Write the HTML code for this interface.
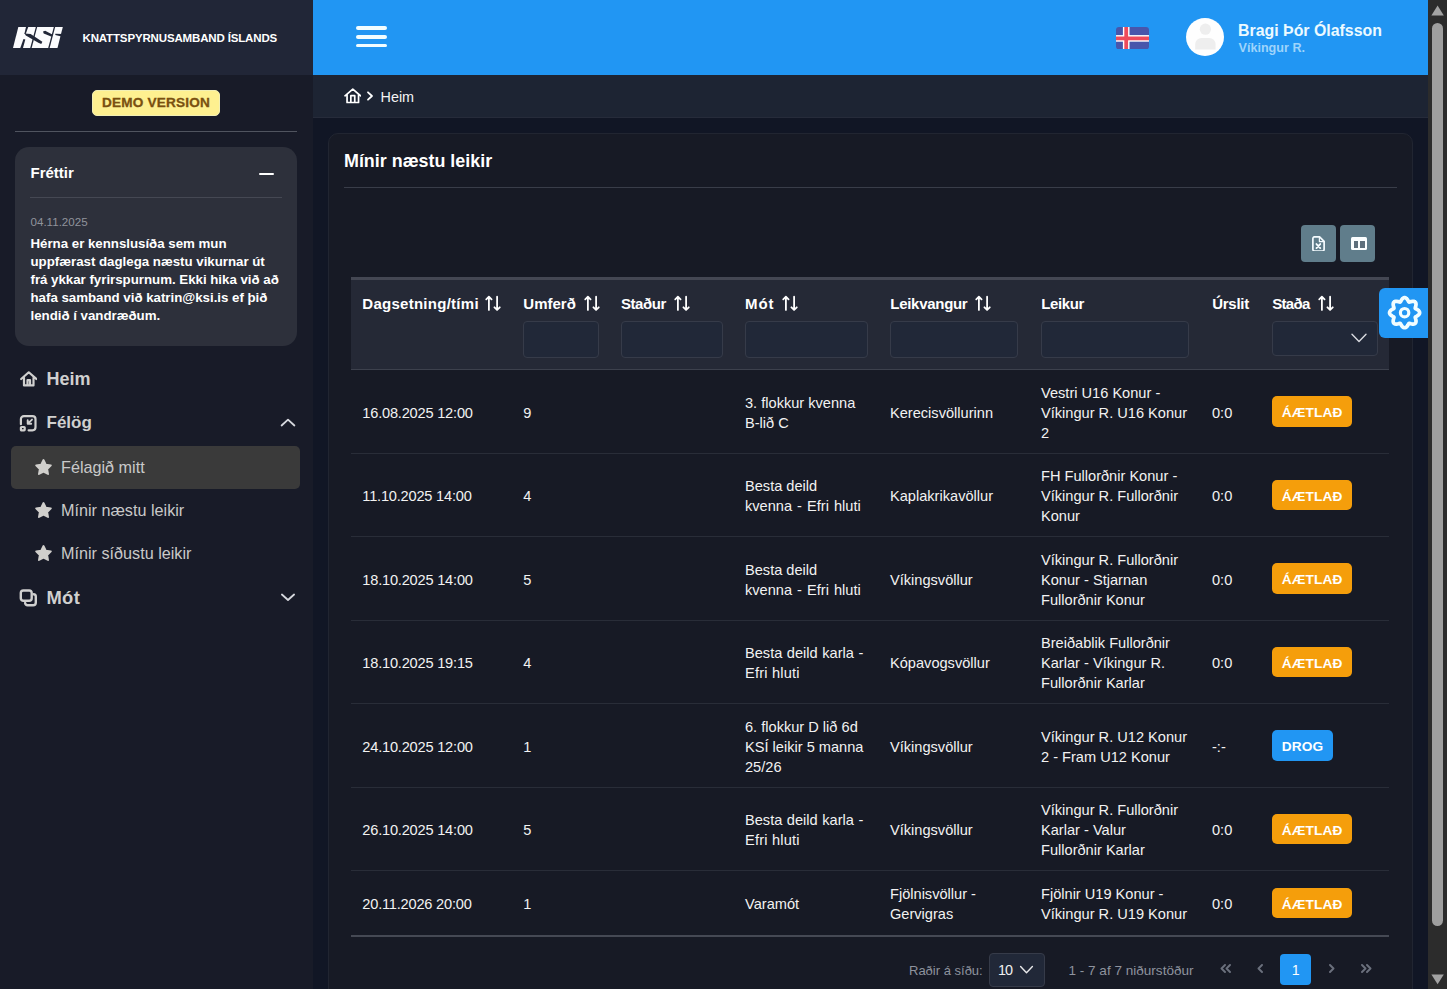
<!DOCTYPE html>
<html lang="is"><head><meta charset="utf-8"><title>KSI</title><style>
*{box-sizing:border-box;margin:0;padding:0}
html,body{width:1447px;height:989px;overflow:hidden;background:#111625;font-family:"Liberation Sans",sans-serif;}
.a{position:absolute}
.t{position:absolute;white-space:nowrap;line-height:1;}
#sb{left:0;top:0;width:313px;height:989px;background:#181b28}
#sbh{left:0;top:0;width:313px;height:75px;background:#212637}
#top{left:313px;top:0;width:1115px;height:75px;background:#2196f3}
#bc{left:313px;top:75px;width:1115px;height:43px;background:#1d2433;border-bottom:1px solid #262b3a}
#scr{left:1428px;top:0;width:19px;height:989px;background:#2c2c2c}
#card{left:328px;top:133px;width:1085px;height:900px;background:#171a25;border:1px solid #212531;border-radius:10px}
.inp{position:absolute;background:#212838;border:1px solid #363b49;border-radius:4px}
.rowb{position:absolute;left:351px;width:1038px;height:1px;background:#292d38}
.cell{position:absolute;white-space:nowrap;color:#f2f2f2;font-size:14.6px;line-height:20px;}
.th{position:absolute;white-space:nowrap;color:#fff;font-weight:bold;font-size:15px;line-height:16px}
.badge{position:absolute;height:30.8px;border-radius:5px;color:#fff;font-weight:bold;font-size:13.7px;line-height:30.8px;padding-top:2px;text-align:center;letter-spacing:0.15px}
.mi{position:absolute;white-space:nowrap;color:#d0d0cf;font-weight:bold;font-size:17.4px;line-height:20px}
.si{position:absolute;white-space:nowrap;color:#c9c9c9;font-size:16.2px;line-height:20px}
.nl{position:absolute;left:30.5px;white-space:nowrap;color:#fff;font-weight:bold;font-size:13.3px;line-height:18px;letter-spacing:-0.02px}
</style></head><body>
<div id="sb" class="a"></div><div id="sbh" class="a"></div>
<svg class="a" style="left:5px;top:20px" width="70" height="35" viewBox="0 0 1447 724">
<polygon points="275,145 1195,145 1085,580 165,580" fill="#fbfbfd"/>
<g fill="#212637" stroke="none">
<polygon points="640,135 668,135 548,590 518,590"/>
<polygon points="1012,135 1040,135 920,590 890,590"/>
<polygon points="436,135 484,135 428,292 400,292"/>
<polygon points="405,278 530,288 772,448 750,498 690,470 430,322"/>
<polygon points="382,392 420,402 368,590 312,590"/>
<polygon points="786,238 832,222 978,298 966,348 800,280"/>
<polygon points="1040,284 1200,288 1188,348 1040,308"/>
</g></svg>
<div class="t" style="left:82.5px;top:33px;color:#fff;font-weight:bold;font-size:11.5px;letter-spacing:-0.15px">KNATTSPYRNUSAMBAND ÍSLANDS</div>
<div class="a" style="left:92px;top:90px;width:128px;height:26px;background:#fef090;border:1px solid #f2efb4;border-radius:5px;color:#7a5010;-webkit-text-stroke:0.3px #7a5010;font-weight:bold;font-size:13.6px;line-height:24.4px;text-align:center;letter-spacing:0.2px">DEMO VERSION</div>
<div class="a" style="left:15px;top:131px;width:282px;height:1px;background:#50545f"></div>
<div class="a" style="left:15px;top:147px;width:282px;height:199px;background:#2d303b;border-radius:14px"></div>
<div class="t" style="left:30.5px;top:165.3px;color:#fff;font-weight:bold;font-size:15px">Fréttir</div>
<div class="a" style="left:259px;top:172.6px;width:15px;height:2px;background:#fff;border-radius:1px"></div>
<div class="a" style="left:30px;top:197px;width:252px;height:1px;background:#454853"></div>
<div class="t" style="left:30.5px;top:215.5px;color:#90939b;font-size:11.6px">04.11.2025</div>
<div class="nl" style="top:234.7px">Hérna er kennslusíða sem mun</div>
<div class="nl" style="top:252.8px">uppfærast daglega næstu vikurnar út</div>
<div class="nl" style="top:270.9px">frá ykkar fyrirspurnum. Ekki hika við að</div>
<div class="nl" style="top:289.0px">hafa samband við katrin@ksi.is ef þið</div>
<div class="nl" style="top:307.1px">lendið í vandræðum.</div>
<svg class="a" style="left:19.5px;top:371px" width="17.5" height="15.6" viewBox="0 0 18 16" fill="none" stroke="#d0d0cf" stroke-width="2.25" stroke-linejoin="round" stroke-linecap="round"><path d="M1.2 8.2L9 1.3l7.8 6.9M4.1 6.8V14.8h9.8V6.8M7.7 14.6V9.4h2.6v5.2"/></svg>
<div class="mi" style="left:46.5px;top:368.6px;font-size:18px">Heim</div>
<svg class="a" style="left:19px;top:413.5px" width="19" height="19" viewBox="0 0 19 19" fill="none" stroke="#d0d0cf" stroke-width="2.2" stroke-linecap="round" stroke-linejoin="round"><path d="M1.9 10.2V5.1a3 3 0 0 1 3-3h8.6a3 3 0 0 1 3 3v8.2a3 3 0 0 1-3 3H9.6"/><rect x="1.9" y="13" width="3.8" height="3.3" rx="0.6"/><path d="M13 5.6L8.8 9.6M8.7 6.3v3.4h3.5" stroke-width="1.9"/></svg>
<div class="mi" style="left:46.5px;top:413.3px;font-size:17px">Félög</div>
<svg class="a" style="left:279.7px;top:417px" width="16" height="11" viewBox="0 0 16 11" fill="none" stroke="#d6d8de" stroke-width="1.8" stroke-linecap="round" stroke-linejoin="round"><path d="M1.6 8.5L8 2.6l6.4 5.9"/></svg>
<div class="a" style="left:11px;top:446px;width:289px;height:43px;background:#3a3a3a;border-radius:5px"></div>
<svg class="a" style="left:34px;top:457.6px" width="19" height="18" viewBox="0 0 24 23"><path fill="#d0cfcc" stroke="#d0cfcc" stroke-width="2.4" stroke-linejoin="round" d="M12 2.6l2.9 5.9 6.5.9-4.7 4.6 1.1 6.5L12 17.4l-5.8 3.1 1.1-6.5L2.6 9.4l6.5-.9z"/></svg>
<div class="si" style="left:61px;top:456.5px">Félagið mitt</div>
<svg class="a" style="left:34px;top:500.8px" width="19" height="18" viewBox="0 0 24 23"><path fill="#d0cfcc" stroke="#d0cfcc" stroke-width="2.4" stroke-linejoin="round" d="M12 2.6l2.9 5.9 6.5.9-4.7 4.6 1.1 6.5L12 17.4l-5.8 3.1 1.1-6.5L2.6 9.4l6.5-.9z"/></svg>
<div class="si" style="left:61px;top:499.7px">Mínir næstu leikir</div>
<svg class="a" style="left:34px;top:544.4px" width="19" height="18" viewBox="0 0 24 23"><path fill="#d0cfcc" stroke="#d0cfcc" stroke-width="2.4" stroke-linejoin="round" d="M12 2.6l2.9 5.9 6.5.9-4.7 4.6 1.1 6.5L12 17.4l-5.8 3.1 1.1-6.5L2.6 9.4l6.5-.9z"/></svg>
<div class="si" style="left:61px;top:543.3px">Mínir síðustu leikir</div>
<svg class="a" style="left:18px;top:588px" width="20" height="20" viewBox="0 0 20 20" fill="none" stroke="#d0d0cf" stroke-width="2.4" stroke-linejoin="round" stroke-linecap="round"><rect x="2.8" y="2.5" width="10.9" height="10.3" rx="2.6"/><path d="M15.5 6.2a2.3 2.3 0 0 1 2.3 2.3v6a2.7 2.7 0 0 1-2.7 2.7H9.6a2.6 2.6 0 0 1-2.5-2.2"/></svg>
<div class="mi" style="left:46.5px;top:587.6px;font-size:18.4px;letter-spacing:0.3px">Mót</div>
<svg class="a" style="left:279.7px;top:591.5px" width="16" height="11" viewBox="0 0 16 11" fill="none" stroke="#d6d8de" stroke-width="1.8" stroke-linecap="round" stroke-linejoin="round"><path d="M1.9 2.5L8 8l6.1-5.5"/></svg>
<div id="top" class="a"></div>
<div class="a" style="left:356px;top:26.3px;width:31px;height:3.5px;border-radius:2px;background:#f2fdff"></div>
<div class="a" style="left:356px;top:35.2px;width:31px;height:3.5px;border-radius:2px;background:#f2fdff"></div>
<div class="a" style="left:356px;top:43.8px;width:31px;height:3.5px;border-radius:2px;background:#f2fdff"></div>
<svg class="a" style="left:1116px;top:26.5px" width="33" height="22.4" viewBox="0 0 33 22.4"><defs><clipPath id="fc"><rect width="33" height="22.4" rx="3"/></clipPath></defs><g clip-path="url(#fc)"><rect width="33" height="22.4" fill="#4856ab"/><rect x="6.9" width="6.6" height="22.4" fill="#fff"/><rect y="8.1" width="33" height="6.6" fill="#fff"/><rect x="8.3" width="3.8" height="22.4" fill="#ee4b5b"/><rect y="9.5" width="33" height="3.8" fill="#ee4b5b"/></g></svg>
<svg class="a" style="left:1186px;top:18.2px" width="38" height="38" viewBox="0 0 38 38"><circle cx="19" cy="19" r="19" fill="#fefefe"/><circle cx="19.4" cy="11.2" r="5.6" fill="#eeeeee"/><path d="M9.2 31.6v-5.2a6.4 6.4 0 0 1 6.4-6.4h7.6a6.4 6.4 0 0 1 6.4 6.4v5.2z" fill="#eeeeee"/></svg>
<div class="t" style="left:1238px;top:22.6px;color:#ecfaff;font-weight:bold;font-size:15.9px">Bragi Þór Ólafsson</div>
<div class="t" style="left:1238.5px;top:42.4px;color:#9ed4fb;font-weight:bold;font-size:12.6px">Víkingur R.</div>
<div id="bc" class="a"></div>
<svg class="a" style="left:343.5px;top:88px" width="17.6" height="15.6" viewBox="0 0 18 16" fill="none" stroke="#fff" stroke-width="1.75" stroke-linejoin="round" stroke-linecap="round"><path d="M1 8L9 1.1l8 6.9M3.1 6.4V14.9h11.8V6.4M7 14.8V7.9h4v6.9"/></svg>
<svg class="a" style="left:366px;top:91px" width="8" height="10" viewBox="0 0 8 10" fill="none" stroke="#fff" stroke-width="1.8" stroke-linecap="round" stroke-linejoin="round"><path d="M2 1.3L6 5 2 8.7"/></svg>
<div class="t" style="left:380.5px;top:90.2px;color:#f4f4f4;font-size:14.4px">Heim</div>
<div id="card" class="a"></div>
<div class="t" style="left:344px;top:152.5px;color:#fff;font-weight:bold;font-size:17.9px">Mínir næstu leikir</div>
<div class="a" style="left:344px;top:187px;width:1053px;height:1px;background:#393d49"></div>
<div class="a" style="left:1301px;top:225px;width:35px;height:37px;background:#607d8b;border-radius:4px"></div>
<div class="a" style="left:1340px;top:225px;width:35px;height:37px;background:#607d8b;border-radius:4px"></div>
<svg class="a" style="left:1312.2px;top:235.6px" width="13" height="15.9" viewBox="0 0 13.4 16.4" fill="none" stroke="#f4fbff" stroke-width="1.75" stroke-linejoin="round" stroke-linecap="round"><path d="M2.2 0.9h5.6l4.7 4.7v8a1.9 1.9 0 0 1-1.9 1.9H2.8a1.9 1.9 0 0 1-1.9-1.9V2.8a1.9 1.9 0 0 1 1.3-1.9z"/><path d="M7.6 1v4.8h4.8" stroke-width="1.2"/><path d="M4.6 8.3l3.9 4.2M8.5 8.3l-3.9 4.2" stroke-width="1.9"/></svg>
<div class="a" style="left:1351px;top:236.8px;width:16px;height:13.4px;background:#fbfeff;border-radius:1.5px"></div>
<div class="a" style="left:1353.5px;top:240.8px;width:4.4px;height:6.8px;background:#5d6f7c"></div>
<div class="a" style="left:1360.2px;top:240.8px;width:4.4px;height:6.8px;background:#5d6f7c"></div>
<div class="a" style="left:351px;top:277px;width:1038px;height:92.5px;background:#252936;border-top:3px solid #444753;border-bottom:1px solid #3d414d"></div>
<div class="th" style="left:362.3px;top:295.6px;letter-spacing:0.27px">Dagsetning/tími</div>
<svg class="a" style="left:485px;top:295.2px" width="17" height="17" viewBox="0 0 17 17" fill="none" stroke="#fff" stroke-width="1.8" stroke-linecap="round" stroke-linejoin="round"><path d="M3.9 14.9V1.7M1.25 4.3l2.65-2.6 2.65 2.6M12.1 1.7v13.2M9.45 12.3l2.65 2.6 2.65-2.6"/></svg>
<div class="th" style="left:523.3px;top:295.6px;letter-spacing:0.0px">Umferð</div>
<svg class="a" style="left:583.5px;top:295.2px" width="17" height="17" viewBox="0 0 17 17" fill="none" stroke="#fff" stroke-width="1.8" stroke-linecap="round" stroke-linejoin="round"><path d="M3.9 14.9V1.7M1.25 4.3l2.65-2.6 2.65 2.6M12.1 1.7v13.2M9.45 12.3l2.65 2.6 2.65-2.6"/></svg>
<div class="th" style="left:621px;top:295.6px;letter-spacing:-0.45px">Staður</div>
<svg class="a" style="left:674.3px;top:295.2px" width="17" height="17" viewBox="0 0 17 17" fill="none" stroke="#fff" stroke-width="1.8" stroke-linecap="round" stroke-linejoin="round"><path d="M3.9 14.9V1.7M1.25 4.3l2.65-2.6 2.65 2.6M12.1 1.7v13.2M9.45 12.3l2.65 2.6 2.65-2.6"/></svg>
<div class="th" style="left:745px;top:295.6px;letter-spacing:0.9px">Mót</div>
<svg class="a" style="left:781.7px;top:295.2px" width="17" height="17" viewBox="0 0 17 17" fill="none" stroke="#fff" stroke-width="1.8" stroke-linecap="round" stroke-linejoin="round"><path d="M3.9 14.9V1.7M1.25 4.3l2.65-2.6 2.65 2.6M12.1 1.7v13.2M9.45 12.3l2.65 2.6 2.65-2.6"/></svg>
<div class="th" style="left:890.3px;top:295.6px;letter-spacing:-0.29px">Leikvangur</div>
<svg class="a" style="left:975.2px;top:295.2px" width="17" height="17" viewBox="0 0 17 17" fill="none" stroke="#fff" stroke-width="1.8" stroke-linecap="round" stroke-linejoin="round"><path d="M3.9 14.9V1.7M1.25 4.3l2.65-2.6 2.65 2.6M12.1 1.7v13.2M9.45 12.3l2.65 2.6 2.65-2.6"/></svg>
<div class="th" style="left:1041.2px;top:295.6px;letter-spacing:-0.35px">Leikur</div>
<div class="th" style="left:1212.2px;top:295.6px;letter-spacing:-0.27px">Úrslit</div>
<div class="th" style="left:1272.2px;top:295.6px;letter-spacing:-0.66px">Staða</div>
<svg class="a" style="left:1318.2px;top:295.2px" width="17" height="17" viewBox="0 0 17 17" fill="none" stroke="#fff" stroke-width="1.8" stroke-linecap="round" stroke-linejoin="round"><path d="M3.9 14.9V1.7M1.25 4.3l2.65-2.6 2.65 2.6M12.1 1.7v13.2M9.45 12.3l2.65 2.6 2.65-2.6"/></svg>
<div class="inp" style="left:523px;top:321.3px;width:76px;height:36.5px"></div>
<div class="inp" style="left:621px;top:321.3px;width:102px;height:36.5px"></div>
<div class="inp" style="left:745px;top:321.3px;width:122.5px;height:36.5px"></div>
<div class="inp" style="left:890px;top:321.3px;width:127.5px;height:36.5px"></div>
<div class="inp" style="left:1041px;top:321.3px;width:147.5px;height:36.5px"></div>
<div class="inp" style="left:1272px;top:321px;width:106px;height:35px"></div>
<svg class="a" style="left:1351px;top:333px" width="16" height="10" viewBox="0 0 16 10" fill="none" stroke="#d9dbe0" stroke-width="1.4" stroke-linecap="round" stroke-linejoin="round"><path d="M1 1.3L8 8.4l7-7.1"/></svg>
<div class="cell" style="letter-spacing:-0.2px;left:362.3px;top:402.9px">16.08.2025 12:00</div>
<div class="cell" style="left:523.3px;top:402.9px">9</div>
<div class="cell" style="left:745px;top:392.9px">3. flokkur kvenna<br>B-lið C</div>
<div class="cell" style="left:890px;top:402.9px">Kerecisvöllurinn</div>
<div class="cell" style="left:1041px;top:382.9px">Vestri U16 Konur -<br>Víkingur R. U16 Konur<br>2</div>
<div class="cell" style="left:1212px;top:402.9px">0:0</div>
<div class="badge" style="left:1272px;top:396.2px;width:80.3px;background:#f59e0b">ÁÆTLAÐ</div>
<div class="rowb" style="top:453px"></div>
<div class="cell" style="letter-spacing:-0.2px;left:362.3px;top:486.4px">11.10.2025 14:00</div>
<div class="cell" style="left:523.3px;top:486.4px">4</div>
<div class="cell" style="left:745px;top:476.4px">Besta deild<br><span style="word-spacing:1px">kvenna - Efri hluti</span></div>
<div class="cell" style="left:890px;top:486.4px">Kaplakrikavöllur</div>
<div class="cell" style="left:1041px;top:466.4px">FH Fullorðnir Konur -<br>Víkingur R. Fullorðnir<br>Konur</div>
<div class="cell" style="left:1212px;top:486.4px">0:0</div>
<div class="badge" style="left:1272px;top:479.7px;width:80.3px;background:#f59e0b">ÁÆTLAÐ</div>
<div class="rowb" style="top:536px"></div>
<div class="cell" style="letter-spacing:-0.2px;left:362.3px;top:569.9px">18.10.2025 14:00</div>
<div class="cell" style="left:523.3px;top:569.9px">5</div>
<div class="cell" style="left:745px;top:559.9px">Besta deild<br><span style="word-spacing:1px">kvenna - Efri hluti</span></div>
<div class="cell" style="left:890px;top:569.9px">Víkingsvöllur</div>
<div class="cell" style="left:1041px;top:549.9px">Víkingur R. Fullorðnir<br>Konur - Stjarnan<br>Fullorðnir Konur</div>
<div class="cell" style="left:1212px;top:569.9px">0:0</div>
<div class="badge" style="left:1272px;top:563.2px;width:80.3px;background:#f59e0b">ÁÆTLAÐ</div>
<div class="rowb" style="top:620px"></div>
<div class="cell" style="letter-spacing:-0.2px;left:362.3px;top:653.4px">18.10.2025 19:15</div>
<div class="cell" style="left:523.3px;top:653.4px">4</div>
<div class="cell" style="left:745px;top:643.4px"><span style="word-spacing:0.5px">Besta deild karla -</span><br><span style="letter-spacing:0.2px">Efri hluti</span></div>
<div class="cell" style="left:890px;top:653.4px">Kópavogsvöllur</div>
<div class="cell" style="left:1041px;top:633.4px">Breiðablik Fullorðnir<br>Karlar - Víkingur R.<br>Fullorðnir Karlar</div>
<div class="cell" style="left:1212px;top:653.4px">0:0</div>
<div class="badge" style="left:1272px;top:646.7px;width:80.3px;background:#f59e0b">ÁÆTLAÐ</div>
<div class="rowb" style="top:703px"></div>
<div class="cell" style="letter-spacing:-0.2px;left:362.3px;top:736.9px">24.10.2025 12:00</div>
<div class="cell" style="left:523.3px;top:736.9px">1</div>
<div class="cell" style="left:745px;top:716.9px">6. flokkur D lið 6d<br>KSÍ leikir 5 manna<br>25/26</div>
<div class="cell" style="left:890px;top:736.9px">Víkingsvöllur</div>
<div class="cell" style="left:1041px;top:726.9px">Víkingur R. U12 Konur<br>2 - Fram U12 Konur</div>
<div class="cell" style="left:1212px;top:736.9px">-:-</div>
<div class="badge" style="left:1272px;top:730.2px;width:61.2px;background:#2196f3">DROG</div>
<div class="rowb" style="top:787px"></div>
<div class="cell" style="letter-spacing:-0.2px;left:362.3px;top:820.4px">26.10.2025 14:00</div>
<div class="cell" style="left:523.3px;top:820.4px">5</div>
<div class="cell" style="left:745px;top:810.4px"><span style="word-spacing:0.5px">Besta deild karla -</span><br><span style="letter-spacing:0.2px">Efri hluti</span></div>
<div class="cell" style="left:890px;top:820.4px">Víkingsvöllur</div>
<div class="cell" style="left:1041px;top:800.4px">Víkingur R. Fullorðnir<br>Karlar - Valur<br>Fullorðnir Karlar</div>
<div class="cell" style="left:1212px;top:820.4px">0:0</div>
<div class="badge" style="left:1272px;top:813.7px;width:80.3px;background:#f59e0b">ÁÆTLAÐ</div>
<div class="rowb" style="top:870px"></div>
<div class="cell" style="letter-spacing:-0.2px;left:362.3px;top:894.4px">20.11.2026 20:00</div>
<div class="cell" style="left:523.3px;top:894.4px">1</div>
<div class="cell" style="left:745px;top:894.4px">Varamót</div>
<div class="cell" style="left:890px;top:884.4px">Fjölnisvöllur -<br>Gervigras</div>
<div class="cell" style="left:1041px;top:884.4px">Fjölnir U19 Konur -<br>Víkingur R. U19 Konur</div>
<div class="cell" style="left:1212px;top:894.4px">0:0</div>
<div class="badge" style="left:1272px;top:887.7px;width:80.3px;background:#f59e0b">ÁÆTLAÐ</div>
<div class="a" style="left:351px;top:935px;width:1038px;height:2px;background:#454954"></div>
<div class="t" style="left:909px;top:963.9px;color:#8e939e;font-size:13px">Raðir á síðu:</div>
<div class="inp" style="left:988.5px;top:952.5px;width:56px;height:34.5px"></div>
<div class="t" style="left:998px;top:963.4px;color:#f0f0f0;font-size:14.4px;letter-spacing:-1px">10</div>
<svg class="a" style="left:1019px;top:964.7px" width="15" height="10" viewBox="0 0 15 10" fill="none" stroke="#e8e8ea" stroke-width="1.4" stroke-linecap="round" stroke-linejoin="round"><path d="M1.6 1.6L7.5 7.8l5.9-6.2"/></svg>
<div class="t" style="left:1068.5px;top:963.8px;color:#8e939e;font-size:13.55px">1 - 7 af 7 niðurstöður</div>
<svg class="a" style="left:1220px;top:964.2px" width="12" height="9" viewBox="0 0 12 9" fill="none" stroke="#6b707d" stroke-width="1.9" stroke-linecap="round" stroke-linejoin="round"><path d="M5 1L1.5 4.5 5 8M10 1L6.5 4.5 10 8"/></svg>
<svg class="a" style="left:1255px;top:964.2px" width="12" height="9" viewBox="0 0 12 9" fill="none" stroke="#6b707d" stroke-width="1.9" stroke-linecap="round" stroke-linejoin="round"><path d="M7 1L3.5 4.5 7 8"/></svg>
<div class="a" style="left:1280.3px;top:954.3px;width:31px;height:30.8px;background:#2196f3;border-radius:4px;color:#fff;font-size:14.2px;line-height:33.6px;text-align:center">1</div>
<svg class="a" style="left:1325px;top:964.2px" width="12" height="9" viewBox="0 0 12 9" fill="none" stroke="#6b707d" stroke-width="1.9" stroke-linecap="round" stroke-linejoin="round"><path d="M5 1L8.5 4.5 5 8"/></svg>
<svg class="a" style="left:1360px;top:964.2px" width="12" height="9" viewBox="0 0 12 9" fill="none" stroke="#6b707d" stroke-width="1.9" stroke-linecap="round" stroke-linejoin="round"><path d="M2 1L5.5 4.5 2 8M7 1L10.5 4.5 7 8"/></svg>
<div class="a" style="left:1379px;top:288px;width:49px;height:50px;background:#2196f3;border-radius:6px 0 0 6px"></div>
<svg class="a" style="left:1379px;top:288px" width="49" height="50" viewBox="0 0 49 50" fill="none" stroke="#f1fdff" stroke-width="3.7" stroke-linejoin="round"><path d="M25.60,9.65 L26.09,9.70 L26.57,9.85 L27.04,10.10 L27.48,10.44 L27.89,10.84 L28.26,11.31 L28.61,11.81 L28.92,12.33 L29.20,12.84 L29.46,13.33 L29.72,13.76 L30.00,14.08 L30.42,14.05 L30.91,13.93 L31.44,13.77 L32.00,13.61 L32.59,13.46 L33.19,13.35 L33.78,13.28 L34.36,13.29 L34.90,13.36 L35.41,13.51 L35.86,13.75 L36.24,14.06 L36.55,14.44 L36.79,14.89 L36.94,15.40 L37.01,15.94 L37.02,16.52 L36.95,17.11 L36.84,17.71 L36.69,18.30 L36.53,18.86 L36.37,19.39 L36.25,19.88 L36.22,20.30 L36.54,20.58 L36.97,20.84 L37.46,21.10 L37.97,21.38 L38.49,21.69 L38.99,22.04 L39.46,22.41 L39.86,22.82 L40.20,23.26 L40.45,23.73 L40.60,24.21 L40.65,24.70 L40.60,25.19 L40.45,25.67 L40.20,26.14 L39.86,26.58 L39.46,26.99 L38.99,27.36 L38.49,27.71 L37.97,28.02 L37.46,28.30 L36.97,28.56 L36.54,28.82 L36.22,29.10 L36.25,29.52 L36.37,30.01 L36.53,30.54 L36.69,31.10 L36.84,31.69 L36.95,32.29 L37.02,32.88 L37.01,33.46 L36.94,34.00 L36.79,34.51 L36.55,34.96 L36.24,35.34 L35.86,35.65 L35.41,35.89 L34.90,36.04 L34.36,36.11 L33.78,36.12 L33.19,36.05 L32.59,35.94 L32.00,35.79 L31.44,35.63 L30.91,35.47 L30.42,35.35 L30.00,35.32 L29.72,35.64 L29.46,36.07 L29.20,36.56 L28.92,37.07 L28.61,37.59 L28.26,38.09 L27.89,38.56 L27.48,38.96 L27.04,39.30 L26.57,39.55 L26.09,39.70 L25.60,39.75 L25.11,39.70 L24.63,39.55 L24.16,39.30 L23.72,38.96 L23.31,38.56 L22.94,38.09 L22.59,37.59 L22.28,37.07 L22.00,36.56 L21.74,36.07 L21.48,35.64 L21.20,35.32 L20.78,35.35 L20.29,35.47 L19.76,35.63 L19.20,35.79 L18.61,35.94 L18.01,36.05 L17.42,36.12 L16.84,36.11 L16.30,36.04 L15.79,35.89 L15.34,35.65 L14.96,35.34 L14.65,34.96 L14.41,34.51 L14.26,34.00 L14.19,33.46 L14.18,32.88 L14.25,32.29 L14.36,31.69 L14.51,31.10 L14.67,30.54 L14.83,30.01 L14.95,29.52 L14.98,29.10 L14.66,28.82 L14.23,28.56 L13.74,28.30 L13.23,28.02 L12.71,27.71 L12.21,27.36 L11.74,26.99 L11.34,26.58 L11.00,26.14 L10.75,25.67 L10.60,25.19 L10.55,24.70 L10.60,24.21 L10.75,23.73 L11.00,23.26 L11.34,22.82 L11.74,22.41 L12.21,22.04 L12.71,21.69 L13.23,21.38 L13.74,21.10 L14.23,20.84 L14.66,20.58 L14.98,20.30 L14.95,19.88 L14.83,19.39 L14.67,18.86 L14.51,18.30 L14.36,17.71 L14.25,17.11 L14.18,16.52 L14.19,15.94 L14.26,15.40 L14.41,14.89 L14.65,14.44 L14.96,14.06 L15.34,13.75 L15.79,13.51 L16.30,13.36 L16.84,13.29 L17.42,13.28 L18.01,13.35 L18.61,13.46 L19.20,13.61 L19.76,13.77 L20.29,13.93 L20.78,14.05 L21.20,14.08 L21.48,13.76 L21.74,13.33 L22.00,12.84 L22.28,12.33 L22.59,11.81 L22.94,11.31 L23.31,10.84 L23.72,10.44 L24.16,10.10 L24.63,9.85 L25.11,9.70 L25.60,9.65Z"/><circle cx="25.6" cy="24.7" r="4.2" stroke-width="3.2"/></svg>
<div id="scr" class="a"></div>
<div class="a" style="left:1432px;top:22.5px;width:11.2px;height:903.5px;background:#9f9f9f;border-radius:6px"></div>
<svg class="a" style="left:1428px;top:0" width="19" height="989" viewBox="0 0 19 989"><path d="M9.6 5.6l6.2 9.8H3.4z" fill="#a3a3a3"/><path d="M9.6 984.2l6.2-9.8H3.4z" fill="#a3a3a3"/></svg>
</body></html>
